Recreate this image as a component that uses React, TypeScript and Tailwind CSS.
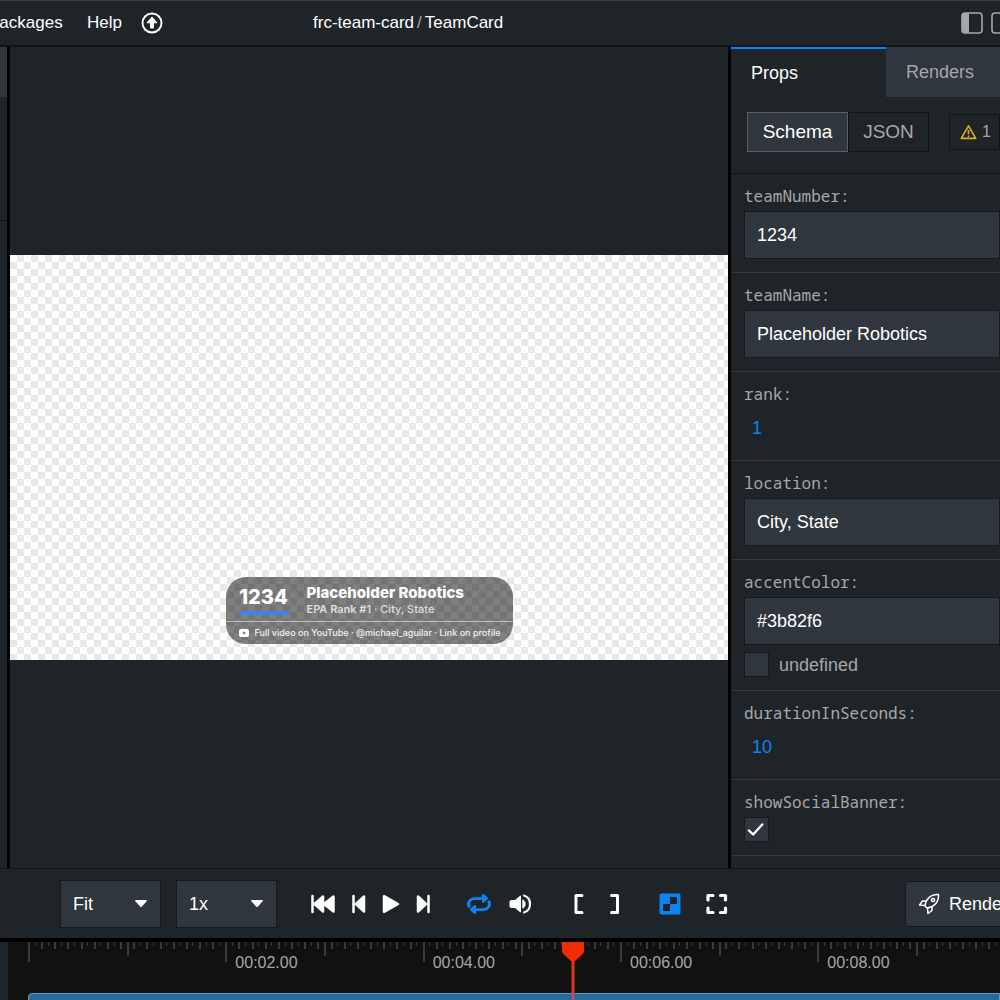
import { useState } from "react";
import type { ReactNode } from "react";

type Field =
  | { kind: "text"; name: string; value: string; optional?: boolean }
  | { kind: "number"; name: string; value: number }
  | { kind: "boolean"; name: string; value: boolean };

const FIELDS: Field[] = [
  { kind: "text", name: "teamNumber", value: "1234" },
  { kind: "text", name: "teamName", value: "Placeholder Robotics" },
  { kind: "number", name: "rank", value: 1 },
  { kind: "text", name: "location", value: "City, State" },
  { kind: "text", name: "accentColor", value: "#3b82f6", optional: true },
  { kind: "number", name: "durationInSeconds", value: 10 },
  { kind: "boolean", name: "showSocialBanner", value: true },
];

const PX_PER_SECOND = 296 / 3;
const TICKS_PER_SECOND = 15;
const VISIBLE_SECONDS = 10;
const CURRENT_SECOND = 5.5;

const formatTime = (seconds: number) => `00:${String(seconds).padStart(2, "0")}.00`;

function MenuBar() {
  return (
    <header className="flex h-[47px] shrink-0 items-center border-t border-b-2 border-t-[#3c3f42] border-b-[#111417] text-[17px]">
      <nav className="flex w-[313px] shrink-0 items-center">
        <button type="button" className="-ml-3 w-[74px] text-right">Packages</button>
        <button type="button" className="ml-[25px]">Help</button>
        <button type="button" aria-label="Update available" className="ml-[19px]">
          <svg width="22" height="22" viewBox="0 0 22 22">
            <circle cx="11" cy="11" r="9.5" fill="none" stroke="#fff" strokeWidth="2" />
            <path d="M11 4.6 16.2 10.2a.6.6 0 0 1-.5 1H13v4.6a.8.8 0 0 1-.8.8H9.8a.8.8 0 0 1-.8-.8v-4.6H6.3a.6.6 0 0 1-.5-1Z" fill="#fff" />
          </svg>
        </button>
      </nav>
      <div className="flex gap-[3px] text-[17px]">
        <span>frc-team-card</span>
        <span className="text-[#a6a7a9]">/</span>
        <a href="#TeamCard">TeamCard</a>
      </div>
      <div className="flex flex-1 justify-end gap-2">
        <button type="button" aria-label="Toggle left sidebar">
          <svg width="22" height="22" viewBox="0 0 22 22">
            <rect x="1" y="1" width="20" height="20" rx="3" fill="none" stroke="#a6a7a9" strokeWidth="1.6" />
            <path d="M1 3a2 2 0 0 1 2-2h5v20H3a2 2 0 0 1-2-2Z" fill="#a6a7a9" />
          </svg>
        </button>
        <button type="button" aria-label="Toggle right sidebar" className="-mr-[13px]">
          <svg width="22" height="22" viewBox="0 0 22 22">
            <rect x="1" y="1" width="20" height="20" rx="3" fill="none" stroke="#a6a7a9" strokeWidth="1.6" />
            <path d="M14 1h5a2 2 0 0 1 2 2v16a2 2 0 0 1-2 2h-5Z" fill="#a6a7a9" />
          </svg>
        </button>
      </div>
    </header>
  );
}

function TeamCard() {
  return (
    <div className="w-[287px] overflow-hidden rounded-[20px] bg-black/50 font-[Inter,sans-serif] text-white">
      <div className="flex h-[45px] items-center border-b border-white/50 pl-[13px]">
        <div className="w-[50px] border-b-4 border-[#3b82f6] text-center text-xl leading-7 font-extrabold">1234</div>
        <div className="pt-1 pl-[18px]">
          <div className="text-[15px] leading-4 font-extrabold">Placeholder Robotics</div>
          <div className="text-[11px] leading-4 font-medium text-white/75">
            <span className="font-semibold">EPA Rank #1</span> · City, State
          </div>
        </div>
      </div>
      <div className="flex h-[22px] items-center gap-[5px] pl-3 text-[9px] font-medium whitespace-nowrap text-white/90">
        <svg width="12" height="10" viewBox="0 0 12 10">
          <rect x="1" y="1" width="10" height="8" rx="2" fill="#fff" />
          <path d="M5 3.2 8 5 5 6.8Z" fill="#777" />
        </svg>
        Full video on YouTube · @michael_aguilar · Link on profile
      </div>
    </div>
  );
}

function Preview() {
  return (
    <main className="flex min-w-0 flex-1 flex-col justify-center border-x-[3px] border-black">
      <div className="flex aspect-[718/405] w-full items-end justify-center bg-white bg-[conic-gradient(#e8e8e8_25%,transparent_0_50%,#e8e8e8_0_75%,transparent_0)] bg-[length:14px_14px] pb-4">
        <TeamCard />
      </div>
    </main>
  );
}

function Checkbox({ id, label, defaultChecked }: { id: string; label: string; defaultChecked?: boolean }) {
  const [checked, setChecked] = useState(!!defaultChecked);

  return (
    <span className="relative block size-[25px]">
      <input
        id={id}
        type="checkbox"
        aria-label={label}
        checked={checked}
        onChange={(e) => setChecked(e.target.checked)}
        className="block size-full appearance-none border border-[#15191c] bg-[#2f363d]"
      />
      {checked && (
        <svg className="pointer-events-none absolute inset-0" width="25" height="25" viewBox="0 0 26 26">
          <path d="m5 14 4.500 4.200 9.500-10.500" fill="none" stroke="#fff" strokeWidth="2.400" strokeLinecap="round" strokeLinejoin="round" />
        </svg>
      )}
    </span>
  );
}

function FieldRow({ field }: { field: Field }) {
  return (
    <div className="border-b border-[#34393d] pt-3 pb-[13px] pl-[13px]">
      <label htmlFor={field.name} className="block h-[25px] font-[Noto_Sans_Mono,DejaVu_Sans_Mono,monospace] text-base leading-5 text-[#a6a7a9]">
        {field.name}:
      </label>
      {field.kind === "text" && (
        <input
          id={field.name}
          defaultValue={field.value}
          className="block h-12 w-full border border-[#15191c] bg-[#2f363d] px-3 text-lg"
        />
      )}
      {field.kind === "number" && (
        <button id={field.name} type="button" className="block h-[38px] px-2 text-lg text-[#0b84f3]">
          {field.value}
        </button>
      )}
      {field.kind === "boolean" && <Checkbox id={field.name} label={field.name} defaultChecked={field.value} />}
      {field.kind === "text" && field.optional && (
        <div className="mt-[7px] flex h-[25px] items-center gap-[10px]">
          <Checkbox id={`${field.name}-undefined`} label="undefined" />
          <label htmlFor={`${field.name}-undefined`} className="text-lg leading-6 text-[#a6a7a9]">undefined</label>
        </div>
      )}
    </div>
  );
}

function PropsPanel() {
  return (
    <aside className="flex w-[269px] shrink-0 flex-col overflow-hidden">
      <div className="flex h-[50px] shrink-0 text-lg">
        <button type="button" className="w-[155px] shrink-0 border-t-2 border-[#0b84f3] pl-5 text-left">Props</button>
        <button type="button" className="flex-1 bg-[#2f363d] pl-5 text-left text-[#a6a7a9]">Renders</button>
      </div>
      <div className="flex h-[77px] shrink-0 items-center border-b border-[#111417] pb-[6px] pl-4 text-[19px]">
        <button type="button" className="h-10 w-[101px] shrink-0 border border-[#5c6063] bg-[#2f363d]">Schema</button>
        <button type="button" className="h-10 w-[81px] shrink-0 border border-[#111417] text-[#a6a7a9]">JSON</button>
        <button type="button" aria-label="1 warning" className="ml-5 flex h-9 flex-1 items-center gap-[5px] border border-[#111417] pl-[10px] text-base text-[#a6a7a9]">
          <svg width="17" height="16" viewBox="0 0 17 16" className="shrink-0">
            <path d="M8.5 1.8 15.7 14.4H1.3Z" fill="none" stroke="#d9b01c" strokeWidth="1.6" strokeLinejoin="round" />
            <path d="M8.5 6v4.200M8.5 11.400v1.600" stroke="#d9b01c" strokeWidth="1.6" />
          </svg>
          1
        </button>
      </div>
      <form className="min-h-0 flex-1 overflow-hidden">
        {FIELDS.map((field) => (
          <FieldRow key={field.name} field={field} />
        ))}
      </form>
    </aside>
  );
}

function Dropdown({ label, value }: { label: string; value: string }) {
  return (
    <div className="relative flex h-12 w-[101px] items-center">
      <select aria-label={label} className="size-full appearance-none border border-[#15191c] bg-[#2f363d] px-3 text-lg">
        <option>{value}</option>
      </select>
      <svg className="pointer-events-none absolute right-[13px]" width="14" height="9" viewBox="0 0 14 9">
        <path d="M2 1h10q1.5 0 .6 1.3L8 7.5q-1 1-2 0L1.4 2.3Q.5 1 2 1Z" fill="#fff" />
      </svg>
    </div>
  );
}

function IconButton({ label, children }: { label: string; children: ReactNode }) {
  return (
    <button type="button" aria-label={label} className="shrink-0">
      {children}
    </button>
  );
}

function Controls() {
  return (
    <div className="flex h-[70px] shrink-0 items-center border-t border-[#111417]">
      <div className="flex gap-[15px] pl-[60px]">
        <Dropdown label="Preview size" value="Fit" />
        <Dropdown label="Playback rate" value="1x" />
      </div>
      <div className="ml-[33px] flex items-center gap-4">
        <IconButton label="Jump to beginning">
          <svg width="25" height="20" viewBox="0 0 25 20">
            <path d="M2.5 2v16M13 2.5v15L4.5 10ZM23.5 2.5v15L14 10Z" fill="#fff" stroke="#fff" strokeWidth="2.5" strokeLinejoin="round" strokeLinecap="round" />
          </svg>
        </IconButton>
        <IconButton label="Previous frame">
          <svg width="15" height="20" viewBox="0 0 15 20">
            <path d="M2.5 2v16M13 2.5v15L5 10Z" fill="#fff" stroke="#fff" strokeWidth="2.5" strokeLinejoin="round" strokeLinecap="round" />
          </svg>
        </IconButton>
        <IconButton label="Play">
          <svg width="18" height="20" viewBox="0 0 18 20">
            <path d="M2 2.2v15.600L16 10Z" fill="#fff" stroke="#fff" strokeWidth="2.5" strokeLinejoin="round" />
          </svg>
        </IconButton>
        <IconButton label="Next frame">
          <svg width="15" height="20" viewBox="0 0 15 20">
            <path d="M12.5 2v16M2 2.5v15L10 10Z" fill="#fff" stroke="#fff" strokeWidth="2.5" strokeLinejoin="round" strokeLinecap="round" />
          </svg>
        </IconButton>
      </div>
      <div className="ml-9 flex items-center gap-[18px]">
        <IconButton label="Loop">
          <svg width="24" height="22" viewBox="0 0 512 512" preserveAspectRatio="none">
            <path
              fill="#0b84f3"
              d="M493.544 181.463c11.956 22.605 18.655 48.4 18.452 75.75C511.339 345.365 438.56 416 350.404 416H192v47.495c0 22.475-26.177 32.268-40.971 17.475l-80-80c-9.372-9.373-9.372-24.569 0-33.941l80-80C166.138 271.92 192 282.686 192 304v48h158.875c52.812 0 96.575-42.182 97.12-94.992.155-15.045-3.17-29.312-9.218-42.046-4.362-9.185-2.421-20.124 4.8-27.284 4.745-4.706 8.641-8.555 11.876-11.786 11.368-11.352 30.579-8.631 38.091 5.571zM64.005 254.992c.545-52.81 44.308-94.992 97.12-94.992H320v47.505c0 22.374 26.121 32.312 40.971 17.465l80-80c9.372-9.373 9.372-24.569 0-33.941l-80-80C346.14 16.197 320 26.058 320 48.545V96H161.596C73.44 96 .661 166.635.005 254.787c-.204 27.35 6.495 53.145 18.452 75.75 7.512 14.202 26.723 16.923 38.091 5.57 3.235-3.231 7.13-7.08 11.876-11.786 7.22-7.16 9.162-18.098 4.8-27.284-6.049-12.735-9.374-27.001-9.219-42.045z"
            />
          </svg>
        </IconButton>
        <IconButton label="Mute">
          <svg width="24" height="22" viewBox="0 0 24 22">
            <path d="M2 7.5h4l5.5-4.5v16L6 14.5H2Q1 14.5 1 13.5v-5Q1 7.5 2 7.5Z" fill="#fff" stroke="#fff" strokeLinejoin="round" />
            <path d="M14 7.2Q18 11 14 14.8Z" fill="#fff" stroke="#fff" strokeWidth="1.5" strokeLinejoin="round" />
            <path d="M15 2.5c8 2.5 8 14.500 0 17" fill="none" stroke="#fff" strokeWidth="2.2" strokeLinecap="round" />
          </svg>
        </IconButton>
      </div>
      <div className="ml-10 flex items-center gap-6">
        <IconButton label="Mark in">
          <svg width="12" height="22" viewBox="0 0 12 22">
            <path d="M9 2.5H3v17h6" fill="none" stroke="#fff" strokeWidth="3" strokeLinejoin="round" strokeLinecap="round" />
          </svg>
        </IconButton>
        <IconButton label="Mark out">
          <svg width="12" height="22" viewBox="0 0 12 22">
            <path d="M2.5 2.5h6v17h-6" fill="none" stroke="#fff" strokeWidth="3" strokeLinejoin="round" strokeLinecap="round" />
          </svg>
        </IconButton>
      </div>
      <div className="ml-[38px] flex items-center gap-6">
        <IconButton label="Show transparency">
          <svg width="22" height="22" viewBox="0 0 22 22">
            <rect x="0.5" y="0.5" width="21" height="21" rx="2" fill="#0b84f3" />
            <path d="M11 4h7v7h-7ZM4 11h7v7H4Z" fill="#1f2428" />
          </svg>
        </IconButton>
        <IconButton label="Fullscreen">
          <svg width="24" height="22" viewBox="0 0 24 22">
            <path d="M8 2.500H3V7M15.500 2.500H20.500V7M20.500 15v4.500h-5M8 19.500H3V15" fill="none" stroke="#fff" strokeWidth="3.2" strokeLinejoin="round" strokeLinecap="round" />
          </svg>
        </IconButton>
      </div>
      <button type="button" className="-mr-10 ml-auto flex h-[46px] w-[135px] shrink-0 items-center gap-[9px] rounded border border-[#15191c] bg-[#2f363d] pl-3 text-lg">
        <svg width="22" height="22" viewBox="0 0 22 22" fill="none" stroke="#fff" strokeWidth="1.5" strokeLinejoin="round" className="shrink-0">
          <path d="M7 13C7.500 7 12 1 20.500 1.500 21 10 15 14.500 9 15Z" />
          <path d="M8.500 8H4.500L1.500 12l5.500.5M14 13.500v4L10 20.500 9.500 15" />
          <circle cx="15" cy="7" r="1.6" />
        </svg>
        Render
      </button>
    </div>
  );
}

function Timeline() {
  const ticks = Array.from({ length: VISIBLE_SECONDS * TICKS_PER_SECOND }, (_, i) => {
    const height = i % (TICKS_PER_SECOND * 2) === 0 ? 20 : i % TICKS_PER_SECOND === 0 ? 14 : i % 2 === 0 ? 7 : 4;
    return { x: Math.round((i * PX_PER_SECOND) / TICKS_PER_SECOND), height };
  });
  const seconds = Array.from({ length: VISIBLE_SECONDS / 2 }, (_, i) => i * 2);

  return (
    <section aria-label="Timeline" className="flex h-[62px] shrink-0 border-t-4 border-black">
      <div className="w-2 shrink-0" />
      <div className="relative min-w-0 flex-1 overflow-hidden bg-[#111] pl-5">
        <svg width="1000" height="20" className="block max-w-none" fill="#3a3a3a">
          {ticks.map((tick) => (
            <rect key={tick.x} x={tick.x} width={tick.height > 4 ? 2 : 1} height={tick.height} />
          ))}
        </svg>
        <div className="-mt-[9px] flex text-base leading-5 text-[#a6a7a9]">
          {seconds.map((second) => (
            <span key={second} className="shrink-0 pl-[10px]" style={{ width: PX_PER_SECOND * 2 }}>
              {second > 0 && formatTime(second)}
            </span>
          ))}
        </div>
        <div className="mt-5 h-8 rounded-tl border border-[#5a9dc4] bg-[#256b9c]" />
        <div className="absolute top-0 -ml-[9px]" style={{ left: 20 + CURRENT_SECOND * PX_PER_SECOND }}>
          <svg width="22" height="60" viewBox="0 0 22 60">
            <path d="M9.5 18h3v33h-3Z" fill="#d93a1c" />
            <path d="M9.5 51h3v9h-3Z" fill="#b8506a" />
            <path d="M0 0h22v9q0 2-1.5 3.2L13 19q-2 1.5-4 0L1.5 12.2Q0 11 0 9Z" fill="#f02c00" />
          </svg>
        </div>
      </div>
    </section>
  );
}

export default function App() {
  return (
    <div className="flex h-screen flex-col overflow-hidden bg-[#1f2428] font-[Liberation_Sans,Arial,sans-serif] text-white">
      <MenuBar />
      <div className="flex min-h-0 flex-1">
        <div className="w-[7px] shrink-0">
          <div className="h-[50px] bg-[#2f363d]" />
          <div className="h-[124px] border-b border-[#111417]" />
        </div>
        <Preview />
        <PropsPanel />
      </div>
      <Controls />
      <Timeline />
    </div>
  );
}
